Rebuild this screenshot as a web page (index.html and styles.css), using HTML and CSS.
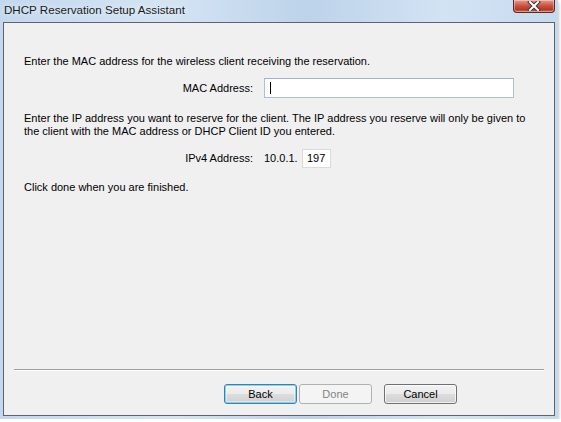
FILE: index.html
```html
<!DOCTYPE html>
<html lang="en">
<head>
    <meta charset="UTF-8">
    <title>DHCP Reservation Setup Assistant</title>
    <link rel="stylesheet" href="styles.css">
</head>
<body>

    <div class="window">
        <div class="titlebar">
            <span class="title">DHCP Reservation Setup Assistant</span>
            <button class="close-btn" title="Close">
                <svg width="14" height="10" viewBox="0 0 14 10">
                    <path d="M3 1 L11 9 M11 1 L3 9" stroke="#3b3b3b" stroke-width="4" stroke-linecap="square"/>
                    <path d="M3 1 L11 9 M11 1 L3 9" stroke="#ffffff" stroke-width="2" stroke-linecap="square"/>
                </svg>
            </button>
        </div>

        <div class="client">
            <div class="content">
                <p class="text">Enter the MAC address for the wireless client receiving the reservation.</p>

                <div class="field mac-row">
                    <label class="field-label">MAC Address:</label>
                    <div class="textbox mac-box"><span class="caret"></span></div>
                </div>

                <p class="text ip-text">Enter the IP address you want to reserve for the client. The IP address you reserve will only be given to the client with the MAC address or DHCP Client ID you entered.</p>

                <div class="field ip-row">
                    <label class="field-label">IPv4 Address:</label>
                    <span class="ip-prefix">10.0.1.</span>
                    <div class="textbox octet-box">197</div>
                </div>

                <p class="text done-text">Click done when you are finished.</p>
            </div>

            <div class="footer">
                <div class="separator"></div>
                <div class="buttons">
                    <button class="btn btn-default">Back</button>
                    <button class="btn" disabled>Done</button>
                    <button class="btn btn-cancel">Cancel</button>
                </div>
            </div>
        </div>
    </div>

</body>
</html>
```

FILE: styles.css
```css
body {
    margin: 0;
    background-color: #ffffff;
    font-family: "Liberation Sans", "DejaVu Sans", sans-serif;
    font-size: 11px;
    color: #000;
}

/* outer aero frame */
.window {
    width: 558px;
    height: 419px;
    box-sizing: border-box;
    padding: 0 3px 3px 3px;
    display: flex;
    flex-direction: column;
    background: linear-gradient(90deg, #c3d8ee 0%, #d4e4f4 30%, #bdd3ea 55%, #d2e3f4 80%, #c6daee 100%);
    box-shadow: 0 2px 4px rgba(0,0,0,0.35);
}

.titlebar {
    height: 22px;
    display: flex;
    justify-content: space-between;
    align-items: flex-start;
    flex-shrink: 0;
}

.title {
    padding: 3px 0 0 1px;
    font-size: 11.6px;
    color: #1a1a1a;
    text-shadow: 0 0 6px rgba(255,255,255,0.9);
}

.close-btn {
    width: 42px;
    height: 13px;
    padding: 0;
    border: 1px solid #5a2a24;
    border-top: none;
    border-radius: 0 0 4px 4px;
    background: linear-gradient(#e39d8f, #c9503d 50%, #b53a26 80%, #d4705a);
    display: flex;
    align-items: center;
    justify-content: center;
    box-shadow: inset 0 0 0 1px rgba(255,255,255,0.35);
}

.client {
    flex: 1;
    display: flex;
    flex-direction: column;
    justify-content: space-between;
    background-color: #f0f0f0;
    border: 1px solid #5d6470;
}

.content {
    padding: 32px 20px 0 20px;
}

.text {
    margin: 0;
    line-height: 13.5px;
}

.field {
    display: flex;
    align-items: center;
}

.field-label {
    width: 229px;
    text-align: right;
    margin-right: 11px;
}

.mac-row {
    margin-top: 9px;
}

.textbox {
    box-sizing: border-box;
    background-color: #ffffff;
    border: 1px solid #abc0d6;
    border-top-color: #a3b3c6;
}

.mac-box {
    width: 250px;
    height: 20px;
    padding: 3px 0 0 5px;
}

.caret {
    display: block;
    width: 1px;
    height: 12px;
    background-color: #000;
}

.ip-text {
    margin-top: 14px;
}

.ip-row {
    margin-top: 10px;
}

.ip-prefix {
    margin-right: 4px;
}

.octet-box {
    width: 29px;
    height: 19px;
    border-color: #dadada;
    line-height: 17px;
    text-align: center;
}

.done-text {
    margin-top: 13px;
}

.footer {
    padding: 0 10px 11px 10px;
}

.separator {
    border-top: 1px solid #a0a0a0;
    border-bottom: 1px solid #ffffff;
    margin-bottom: 13px;
}

.buttons {
    display: flex;
    padding-left: 210px;
}

.btn {
    width: 73px;
    height: 20px;
    padding: 0;
    font-family: inherit;
    font-size: 11px;
    color: #000;
    border: 1px solid #707070;
    border-radius: 3px;
    background: linear-gradient(#f2f2f2 0%, #ebebeb 50%, #dddddd 51%, #cfcfcf 100%);
    box-shadow: inset 0 0 0 1px rgba(255,255,255,0.7);
}

.btn + .btn {
    margin-left: 2px;
}

/* focused default button: blue outline */
.btn-default {
    border-color: #3c7fb1;
    box-shadow: inset 0 0 0 1px #7fd3f7, inset 0 0 0 2px rgba(255,255,255,0.4);
}

.btn:disabled {
    color: #838383;
    border-color: #adb2b5;
    background: #f4f4f4;
    box-shadow: none;
}

.btn-cancel {
    margin-left: 12px !important;
}
```
